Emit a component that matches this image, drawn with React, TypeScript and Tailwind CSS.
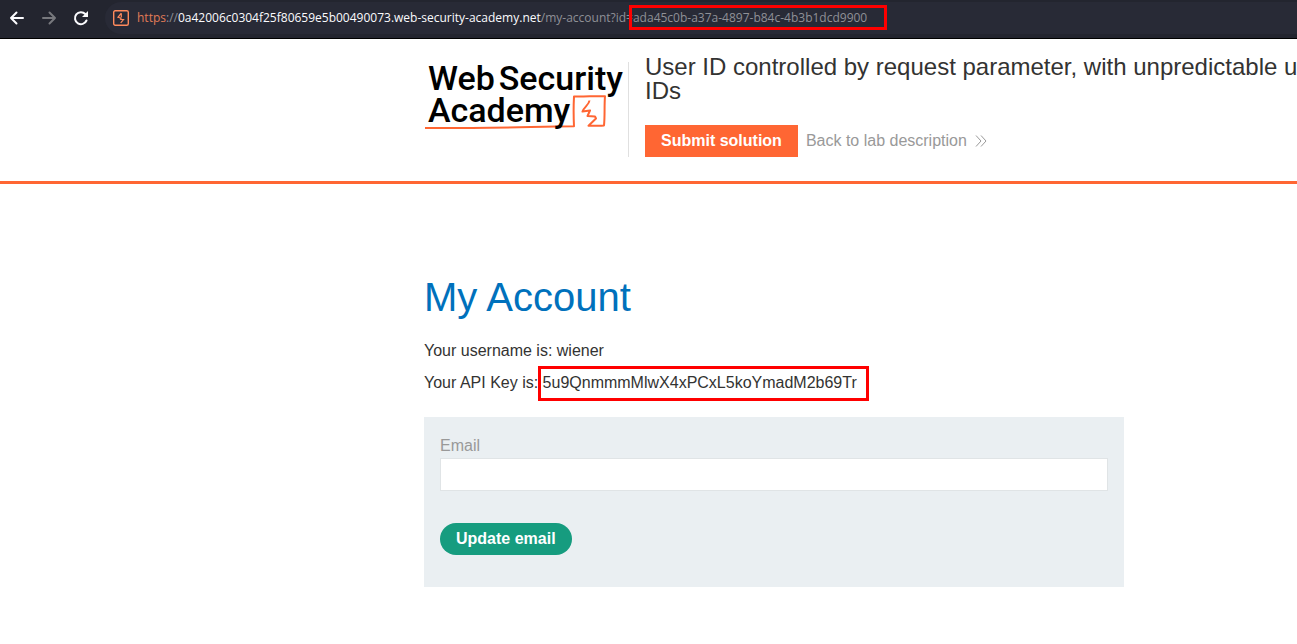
import React from 'react';

function BrowserBar() {
  return (
    <div className="flex h-[39px] items-center border-b border-black bg-[#23252f] pb-0.5 pl-[9px] font-['Open_Sans',sans-serif]">
      <nav aria-label="History" className="flex items-center gap-4">
        <button aria-label="Back" className="size-4 text-[#fbfbfe]">
          <svg viewBox="0 0 16 16" className="size-4" fill="none" stroke="currentColor" strokeWidth="2" strokeLinecap="round" strokeLinejoin="round"><path d="M14 8H2M7.500 2.500 2 8l5.500 5.500" /></svg>
        </button>
        <button aria-label="Forward" disabled className="size-4 text-[#77787d]">
          <svg viewBox="0 0 16 16" className="size-4" fill="none" stroke="currentColor" strokeWidth="2" strokeLinecap="round" strokeLinejoin="round"><path d="M2 8h12M8.500 2.500 14 8l-5.500 5.500" /></svg>
        </button>
        <button aria-label="Reload" className="size-4 text-[#fbfbfe]">
          <svg viewBox="0 0 16 16" className="size-4" fill="none" stroke="currentColor" strokeWidth="2" strokeLinecap="round"><path d="M13.500 10.500A6 6 0 1 1 12.300 4" /><path d="M15 1v6H9z" fill="currentColor" stroke="none" /></svg>
        </button>
      </nav>
      <div className="ml-4 flex h-8 grow items-center rounded-l-full bg-[#282a36] pl-2">
        <svg viewBox="0 0 16 16" className="size-4 shrink-0" fill="none" stroke="#ff8a5c"><rect x="0.700" y="0.700" width="14.600" height="14.600" rx="1.500" strokeWidth="1.400" /><path d="M8.300 3.200 5 7.300 8 8.200 7.600 9.300 10.500 9.600 7.700 12.800M8.300 3.200v4" strokeWidth="1.200" /></svg>
        <span className="ml-2 whitespace-nowrap text-[12px] leading-4 text-[#8f9096]">
          <span className="text-[#e07b56]">https</span>://<span className="text-[#fbfbfe]">0a42006c0304f25f80659e5b00490073.web-security-academy.net</span>/my-account?id=
          <span className="relative">
            ada45c0b-a37a-4897-b84c-4b3b1dcd9900
            <span className="absolute -top-1 -right-5 -bottom-1 -left-1 border-3 border-[#f00]" />
          </span>
        </span>
      </div>
    </div>
  );
}

function Logo() {
  return (
    <a href="#academy" className="relative block h-[72px] w-[204px] shrink-0 font-['Roboto',sans-serif] text-[34px] leading-8 font-medium text-black">
      <svg viewBox="0 0 204 72" className="absolute inset-0 size-full" fill="none" stroke="#ff6633" strokeLinejoin="round">
        <path d="M1 66C50 66.500 100 65 150 64.300C149.500 54 149.500 44 150 34.500C160 34.800 170 34 181 34.200C180.200 44 181 54 180 63.500C175 64.300 170 63.500 164.500 63.700L172 56.500 171 54.500 163.500 54 166 48.500 158.500 49.500C160 45 165 43 165.500 38.500" strokeWidth="2" />
      </svg>
      <span className="relative flex gap-1 pl-1"><span>Web</span><span>Security</span></span>
      <span className="relative block pl-1">Academy</span>
    </a>
  );
}

export default function App() {
  return (
    <div className="min-h-screen overflow-hidden bg-white font-['Liberation_Sans',sans-serif] text-base text-[#333332]">
      <BrowserBar />
      <header className="flex border-b-3 border-[#ff6633] pt-4 pb-6 pl-[424px]">
        <div className="mt-[7px] border-r border-[#e0e0e0]"><Logo /></div>
        <div className="ml-4 min-w-0">
          <h2 className="text-2xl leading-6 whitespace-nowrap">User ID controlled by request parameter, with unpredictable user<br />IDs</h2>
          <div className="mt-[22px] flex items-center gap-2">
            <button className="h-8 bg-[#ff6633] px-4 font-bold text-white">Submit solution</button>
            <a href="#lab" className="flex items-center gap-2 text-[#999]">Back to lab description
              <svg viewBox="0 0 12 12" className="size-3" fill="none" stroke="currentColor"><path d="M1 .5 6 6 1 11.500M6 .5 11 6 6 11.500" /></svg>
            </a>
          </div>
        </div>
      </header>
      <main className="pt-[88px] pl-[424px]">
        <h1 className="text-[40px] leading-[50px] text-[#0071bc]">My Account</h1>
        <p className="mt-[17px] leading-6">Your username is: wiener</p>
        <p className="mt-2 leading-6">Your API Key is: <span className="relative">5u9QnmmmMlwX4xPCxL5koYmadM2b69Tr<span className="absolute -top-2 -right-3 -bottom-2.5 -left-[5px] border-3 border-[#f00]" /></span></p>
        <form className="mt-[22px] max-w-[700px] bg-[#eaeff2] px-4 pt-[17px] pb-8">
          <label htmlFor="email" className="block leading-6 text-[#999]">Email</label>
          <input id="email" type="email" className="block h-[33px] w-full border border-[#e0e4e6] bg-white px-2" />
          <button type="button" className="mt-8 h-8 rounded-full bg-[#169c7f] px-4 font-bold text-white">Update email</button>
        </form>
      </main>
    </div>
  );
}
